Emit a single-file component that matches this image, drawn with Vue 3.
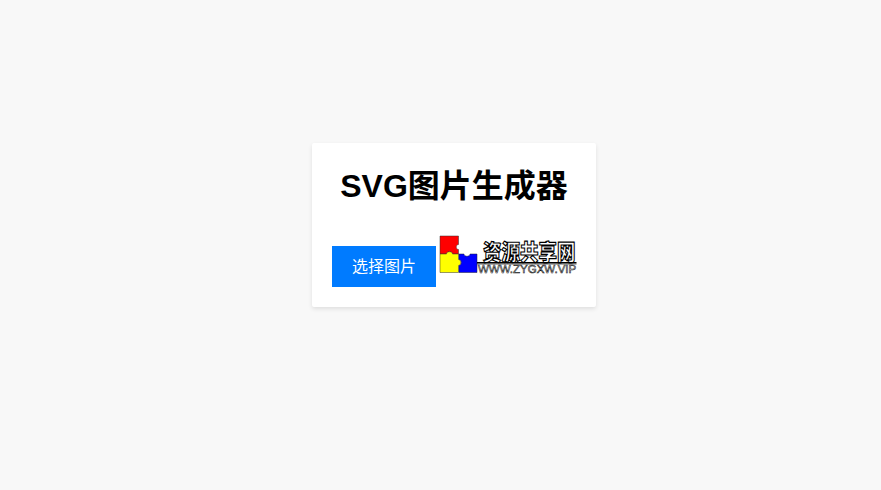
<script setup>
const title = 'SVG图片生成器'
</script>

<template>
  <main class="page">
    <section class="card">
      <h1 class="title">{{ title }}</h1>
      <div class="actions">
        <label class="upload">选择图片</label>
        <svg class="logo" width="137" height="37" viewBox="0 0 137 37" xmlns="http://www.w3.org/2000/svg" role="img" aria-label="资源共享网">
          <path d="M0 0H18.500V8.500C15.500 8.500 15.500 13.500 18.500 13.500V18H12.500C12.500 15 6.500 15 6.500 18H0Z" fill="#ff0000" stroke="#333" stroke-width=".5"/>
          <path d="M0 18H6.500C6.500 15 12.500 15 12.500 18H18.500V23.500C21.500 23.500 21.500 29.500 18.500 29.500V36.500H0Z" fill="#ffff00" stroke="#333" stroke-width=".5"/>
          <path d="M19 18H24C24 21 30 21 30 18H37V36.500H19V29.500C22 29.500 22 23.500 19 23.500Z" fill="#0000ff" stroke="#223" stroke-width=".5"/>
          <text class="logo-cn" transform="translate(43 23.500) scale(1 1.150)">资源共享网</text>
          <rect x="37" y="26" width="99.500" height="1.600" fill="#000"/>
          <rect x="37" y="28" width="99.500" height=".6" fill="#777"/>
          <text class="logo-en" transform="translate(38 36.500) scale(1.160 1.100)">WWW.ZYGXW.VIP</text>
        </svg>
      </div>
    </section>
  </main>
</template>

<style>
html, body { margin: 0; background: #f8f8f8; }
</style>

<style scoped>
.page {
  min-height: 490px;
  display: flex;
  align-items: center;
  justify-content: center;
  box-sizing: border-box;
  padding: 0 0 40px 27px;
  font-family: "Liberation Sans", "Noto Sans CJK SC", sans-serif;
}
.card {
  box-sizing: border-box;
  width: 284px;
  height: 164px;
  padding: 20px;
  background: #fff;
  border-radius: 2px;
  box-shadow: 0 2px 4px rgba(0, 0, 0, 0.1);
  text-align: center;
}
.title {
  margin: 5px 0 31px;
  font-size: 32px;
  line-height: 37px;
  font-weight: 700;
  color: #000;
  white-space: nowrap;
}
.actions {
  display: flex;
  align-items: flex-end;
  gap: 4px;
}
.upload {
  display: block;
  padding: 10px 20px;
  font-size: 16px;
  line-height: 21px;
  color: #fff;
  background: #007bff;
  white-space: nowrap;
}
.logo {
  display: block;
  flex: none;
  margin-bottom: 14px;
  overflow: visible;
}
.logo-cn {
  font-family: "Noto Sans CJK SC", sans-serif;
  font-size: 18.500px;
  font-weight: 900;
  fill: #fff;
  stroke: #000;
  stroke-width: 1px;
}
.logo-en {
  font-family: "Liberation Sans", sans-serif;
  font-size: 9.900px;
  fill: #fff;
  stroke: #111;
  stroke-width: 0.5px;
}
</style>
